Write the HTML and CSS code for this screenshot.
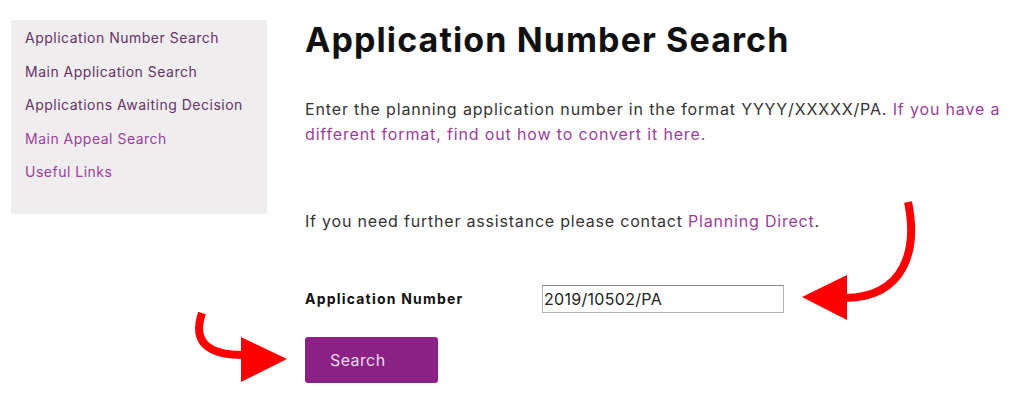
FILE: index.html
```html
<!DOCTYPE html>
<html lang="en">

<head>
    <meta charset="UTF-8">
    <meta name="viewport" content="width=device-width, initial-scale=1.0">
    <title>Application Number Search</title>
    <link rel="stylesheet" href="styles.css">
</head>

<body>
    <div class="page">
        <div class="sidebar">
            <ul class="sidenav">
                <li><a class="visited" href="#">Application Number Search</a></li>
                <li><a class="visited" href="#">Main Application Search</a></li>
                <li><a class="visited" href="#">Applications Awaiting Decision</a></li>
                <li><a href="#">Main Appeal Search</a></li>
                <li><a href="#">Useful Links</a></li>
            </ul>
        </div>

        <div class="content">
            <h1>Application Number Search</h1>
            <p class="intro">Enter the planning application number in the format YYYY/XXXXX/PA. <a href="#">If you have a different format, find out how to convert it here.</a></p>
            <p class="help">If you need further assistance please contact <a href="#">Planning Direct</a>.</p>

            <div class="field">
                <label for="appnumber">Application Number</label>
                <input id="appnumber" type="text" value="2019/10502/PA">
            </div>
            <button class="searchbutton" type="button">Search</button>
        </div>
    </div>

    <!-- red annotation arrows drawn over the page -->
    <svg class="arrows" width="1024" height="407" viewBox="0 0 1024 407">
        <path d="M908,202 C918,250 905,297 845,298" fill="none" stroke="#f00" stroke-width="8"/>
        <polygon points="802,297 847,275 847,320" fill="#f00"/>
        <path d="M202,313 C192,342 208,355 243,355" fill="none" stroke="#f00" stroke-width="8"/>
        <polygon points="241,337 241,382 287,359" fill="#f00"/>
    </svg>
</body>

</html>
```

FILE: styles.css
```css
html {
    font-family: 'Inter', 'Open Sans', sans-serif;
    color: #333;
    background-color: #fff;
}

body {
    margin: 0;
}

a {
    color: #9c3d9c;
    text-decoration: none;
}

.page {
    display: flex;
    padding: 20px 20px 0 11px;
}

.sidebar {
    flex-shrink: 0;
    width: 256px;
    height: 194px;
    background-color: #efedee;
}

.sidenav {
    list-style: none;
    margin: 0;
    padding: 1px 0 0 14px;
}

.sidenav li {
    font-size: 14px;
    line-height: 33.5px;
    letter-spacing: 0.5px;
}

.sidenav a.visited {
    color: #663366;
}

.content {
    flex: 1;
    margin-left: 38px;
}

h1 {
    margin: 0;
    font-size: 34px;
    line-height: 40px;
    font-weight: 700;
    letter-spacing: 1.1px;
    color: #111;
}

.intro {
    margin: 37px 0 0 0;
    max-width: 700px;
    font-size: 16px;
    line-height: 24.5px;
    letter-spacing: 0.85px;
}

.help {
    margin: 63px 0 0 0;
    font-size: 16px;
    line-height: 24.5px;
    letter-spacing: 0.8px;
}

.field {
    display: flex;
    align-items: center;
    margin-top: 51px;
}

.field label {
    width: 237px;
    font-size: 14px;
    font-weight: 700;
    letter-spacing: 1.2px;
    color: #111;
}

.field input {
    width: 242px;
    height: 28px;
    box-sizing: border-box;
    padding: 0 1px;
    border: 1px solid #b3b3b3;
    border-top-color: #8a8a8a;
    font-family: inherit;
    font-size: 16px;
    letter-spacing: 0.3px;
    color: #222;
    outline: none;
}

.searchbutton {
    display: block;
    margin-top: 24px;
    width: 133px;
    height: 46px;
    padding: 0 0 0 25px;
    text-align: left;
    background-color: #8b2085;
    color: #eadcea;
    border: none;
    border-radius: 3px;
    font-family: inherit;
    font-size: 16px;
    letter-spacing: 0.4px;
}

.arrows {
    position: absolute;
    left: 0;
    top: 0;
    pointer-events: none;
}
```
